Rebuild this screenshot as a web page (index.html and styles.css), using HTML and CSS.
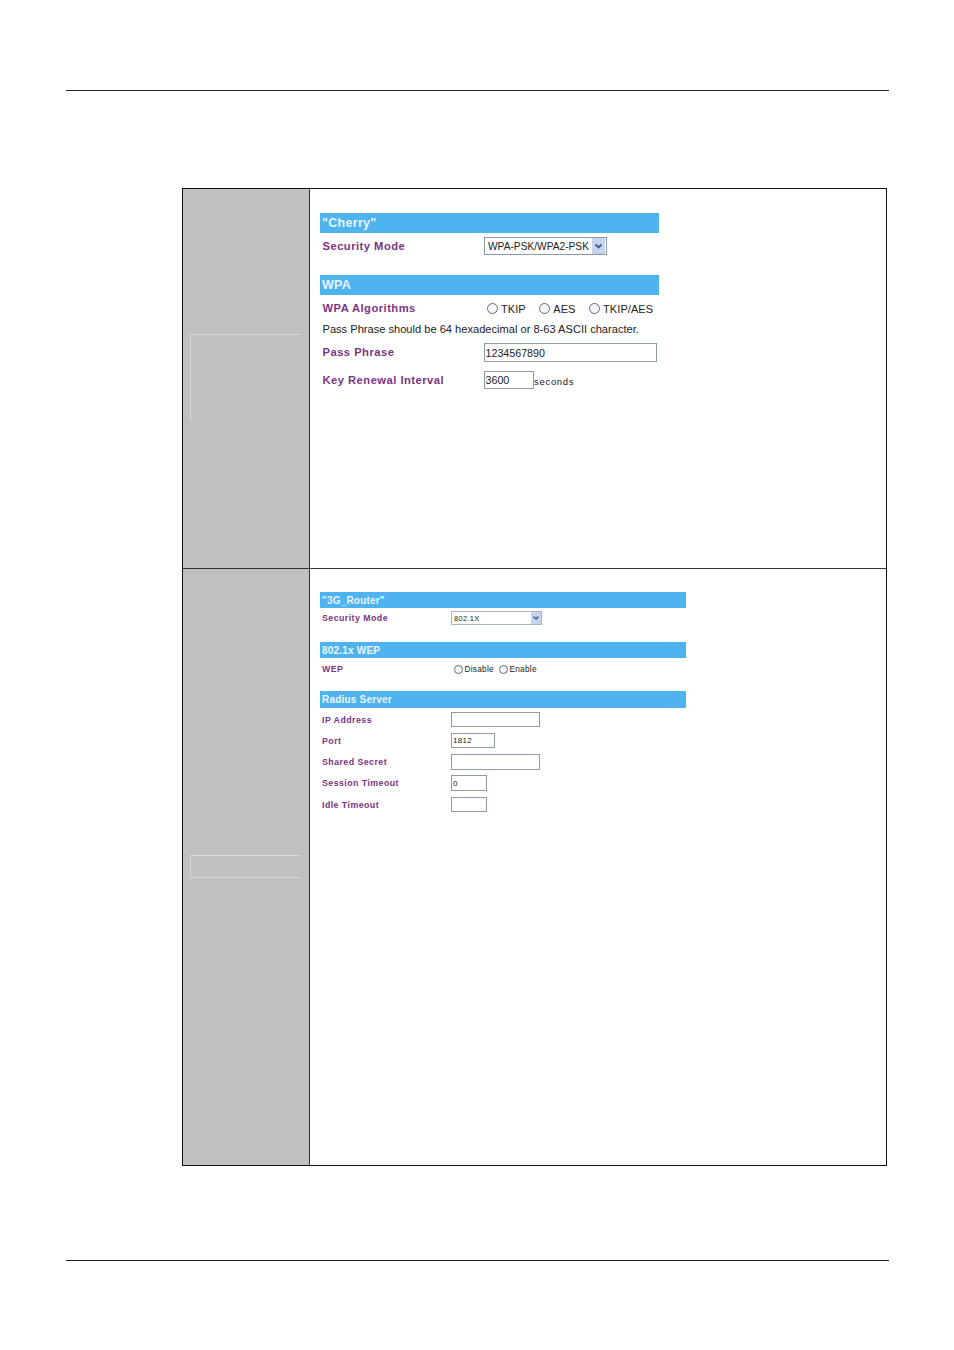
FILE: index.html
```html
<!DOCTYPE html>
<html lang="en">
<head>
<meta charset="utf-8">
<title>Wireless security settings</title>
<link rel="stylesheet" href="styles.css">
</head>
<body>
<div class="page">
  <hr class="rule">
  <section class="table">
    <div class="row row-a">
      <div class="side side-a"><div class="ghost ghost-a"></div></div>
      <div class="main main-a">
        <form class="form form-a">
          <div class="bar bar-a t0">"Cherry"</div>
          <div class="field h18 m4">
            <label class="lab">Security Mode</label>
            <div class="select sel-a"><span>WPA-PSK/WPA2-PSK</span><i class="arrow"><svg viewBox="0 0 13 16" width="13" height="16"><path d="M3.5 6.5 6.5 9.5l3-3" fill="none" stroke="#3a5a9a" stroke-width="1.8"/></svg></i></div>
          </div>
          <div class="bar bar-a m20">WPA</div>
          <div class="field h19 m4">
            <label class="lab">WPA Algorithms</label>
            <div class="radios radios-a">
              <span class="radio"><i></i>TKIP</span>
              <span class="radio"><i></i>AES</span>
              <span class="radio"><i></i>TKIP/AES</span>
            </div>
          </div>
          <p class="help">Pass Phrase should be 64 hexadecimal or 8-63 ASCII character.</p>
          <div class="field h19 m4">
            <label class="lab">Pass Phrase</label>
            <input class="inp w173" type="text" value="1234567890">
          </div>
          <div class="field h18 m9">
            <label class="lab">Key Renewal Interval</label>
            <input class="inp w50" type="text" value="3600"><span class="unit">seconds</span>
          </div>
        </form>
      </div>
    </div>
    <div class="row row-b">
      <div class="side side-b"><div class="ghost ghost-b"></div></div>
      <div class="main main-b">
        <form class="form form-b">
          <div class="bar bar-b">"3G_Router"</div>
          <div class="field h14 m3">
            <label class="lab">Security Mode</label>
            <div class="select sel-b"><span>802.1X</span><i class="arrow"><svg viewBox="0 0 10 12" width="10" height="12"><path d="M2.5 4.5 5 7l2.5-2.5" fill="none" stroke="#3a5a9a" stroke-width="1.5"/></svg></i></div>
          </div>
          <div class="bar bar-b m17">802.1x WEP</div>
          <div class="field h14 m4">
            <label class="lab">WEP</label>
            <div class="radios radios-b">
              <span class="radio"><i></i>Disable</span>
              <span class="radio"><i></i>Enable</span>
            </div>
          </div>
          <div class="bar bar-b bar-tall m15">Radius Server</div>
          <div class="field h15 m4"><label class="lab">IP Address</label><input class="inp w89" type="text"></div>
          <div class="field h15 m6"><label class="lab">Port</label><input class="inp w44" type="text" value="1812"></div>
          <div class="field h16 m6"><label class="lab">Shared Secret</label><input class="inp w89" type="text"></div>
          <div class="field h16 m5"><label class="lab">Session Timeout</label><input class="inp w36" type="text" value="0"></div>
          <div class="field h15 m6"><label class="lab">Idle Timeout</label><input class="inp w36" type="text"></div>
        </form>
      </div>
    </div>
  </section>
  <hr class="rule rule-foot">
</div>
</body>
</html>
```

FILE: styles.css
```css
* { box-sizing: border-box; }
html, body { margin: 0; padding: 0; background: #fff; }
body { font-family: "Liberation Sans", Arial, sans-serif; color: #111; }
.page { width: 954px; height: 1350px; padding-top: 90px; padding-left: 66px; overflow: hidden; }
.rule { width: 823px; height: 1px; margin: 0; border: 0; background: #222; }
.rule-foot { margin-top: 94px; }
.table { width: 705px; height: 978px; margin: 97px 0 0 116px; border: 1px solid #111; }
.row { display: grid; grid-template-columns: 127px 1fr; }
.row-a { height: 380px; border-bottom: 1px solid #333; }
.row-b { height: 596px; }
.side { background: #c0c0c0; border-right: 1px solid #333; padding-left: 7px; }
.side-a { padding-top: 145px; }
.side-b { padding-top: 286px; }
.ghost { width: 111px; border-top: 1px solid #d8d8d8; border-left: 1px solid #d8d8d8; }
.ghost-a { height: 87px; }
.ghost-b { height: 23px; border-bottom: 1px solid #d8d8d8; }
.main { padding-left: 10px; }
.main-a { padding-top: 24px; }
.main-b { padding-top: 23px; }
.form-a { width: 339px; }
.form-b { width: 366px; }
.bar { background: #4fb3f0; color: #eaf5fc; font-weight: bold; padding-left: 2px; display: flex; align-items: center; }
.bar-a { height: 20px; font-size: 12.5px; letter-spacing: .3px; }
.bar-b { height: 16px; font-size: 10px; letter-spacing: .2px; }
.bar-tall { height: 17px; }
.field { display: flex; align-items: center; }
.lab { color: #7b3485; font-weight: bold; }
.form-a .lab { width: 164px; padding: 0 0 1px 2.5px; font-size: 11.2px; letter-spacing: .48px; flex: none; }
.form-b .lab { width: 131px; padding-left: 2px; font-size: 8.8px; letter-spacing: .45px; flex: none; }
.h14 { height: 14px; } .h15 { height: 15px; } .h16 { height: 16px; }
.h18 { height: 18px; } .h19 { height: 19px; }
.m3 { margin-top: 3px; } .m4 { margin-top: 4px; } .m5 { margin-top: 5px; } .m6 { margin-top: 6px; }
.m9 { margin-top: 9px; } .m15 { margin-top: 15px; } .m17 { margin-top: 17px; } .m20 { margin-top: 20px; }
.select { display: flex; align-items: center; justify-content: space-between; height: 100%; background: #fff; border: 1px solid #8a9aa8; color: #222; }
.select .arrow { display: flex; background: #c6d4ee; }
.sel-a { width: 123px; padding: 0 1px 0 3px; font-size: 10.2px; }
.sel-b { width: 91px; padding: 0 0 0 2px; font-size: 7.5px; letter-spacing: .3px; border-color: #a8b6c4; }
.inp { display: block; height: 100%; margin: 0; background: #fff; border: 1px solid #8d9ba8; border-radius: 0; outline: 0; color: #222; font-family: inherit; }
.form-a .inp { font-size: 10.7px; padding: 0 1px 0 0.5px; }
.form-b .inp { font-size: 8px; padding: 0 1px; letter-spacing: .3px; }
.w173 { width: 173px; } .w50 { width: 50px; } .w89 { width: 89px; } .w44 { width: 44px; } .w36 { width: 36px; }
.unit { font-size: 9.5px; letter-spacing: .7px; padding-top: 3px; color: #222; }
.radios { display: flex; color: #222; }
.radio { display: flex; align-items: center; }
.radio i { display: block; border-radius: 50%; border: 1px solid #5c6f80; background: #f4f6f8; flex: none; }
.radios-a { padding-left: 3px; gap: 13.5px; font-size: 11px; letter-spacing: .08px; }
.radios-a .radio i { width: 11px; height: 11px; margin-right: 3px; }
.radios-b { padding-left: 3px; gap: 5px; font-size: 8.3px; letter-spacing: .25px; }
.radios-b .radio i { width: 9px; height: 9px; margin-right: 1.5px; }
.help { margin: 2px 0 0; height: 19px; line-height: 19px; padding-left: 2.5px; font-size: 11.1px; color: #222; white-space: nowrap; }
```
